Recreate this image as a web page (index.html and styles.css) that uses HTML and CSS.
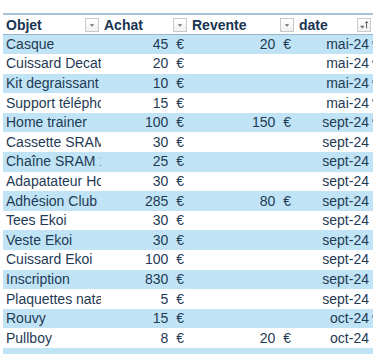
FILE: index.html
```html
<!DOCTYPE html>
<html lang="fr">
<head>
<meta charset="utf-8">
<title>Tableau</title>
<link rel="stylesheet" href="styles.css">
</head>
<body>
<table class="sheet">
  <colgroup>
    <col class="c-obj"><col class="c-achat"><col class="c-rev"><col class="c-date">
  </colgroup>
  <thead>
    <tr>
      <th><div class="hd"><span>Objet</span><span class="btn"><svg viewBox="0 0 14 14"><path d="M4.5 6h5l-2.5 3z" fill="#6b6b6b"/></svg></span></div></th>
      <th><div class="hd"><span>Achat</span><span class="btn"><svg viewBox="0 0 14 14"><path d="M4.5 6h5l-2.5 3z" fill="#6b6b6b"/></svg></span></div></th>
      <th><div class="hd"><span>Revente</span><span class="btn"><svg viewBox="0 0 14 14"><path d="M4.5 6h5l-2.5 3z" fill="#6b6b6b"/></svg></span></div></th>
      <th><div class="hd"><span>date</span><span class="btn"><svg viewBox="0 0 14 14"><path d="M2.5 8h5l-2.5 3z" fill="#6b6b6b"/><path d="M10 3v8M8.3 4.8L10 3l1.7 1.8" stroke="#555" stroke-width="1.1" fill="none"/></svg></span></div></th>
    </tr>
  </thead>
  <tbody>
    <tr class="b"><td class="o">Casque</td><td class="n">45 <i>€</i></td><td class="n">20 <i>€</i></td><td class="d t">mai-24</td></tr>
    <tr><td class="o">Cuissard Decathlon</td><td class="n">20 <i>€</i></td><td></td><td class="d t">mai-24</td></tr>
    <tr class="b"><td class="o">Kit degraissant</td><td class="n">10 <i>€</i></td><td></td><td class="d t">mai-24</td></tr>
    <tr><td class="o">Support téléphone</td><td class="n">15 <i>€</i></td><td></td><td class="d t">mai-24</td></tr>
    <tr class="b"><td class="o">Home trainer</td><td class="n">100 <i>€</i></td><td class="n">150 <i>€</i></td><td class="d t">sept-24</td></tr>
    <tr><td class="o">Cassette SRAM XG</td><td class="n">30 <i>€</i></td><td></td><td class="d">sept-24</td></tr>
    <tr class="b"><td class="o">Chaîne SRAM 10v</td><td class="n">25 <i>€</i></td><td></td><td class="d">sept-24</td></tr>
    <tr><td class="o">Adapatateur Home</td><td class="n">30 <i>€</i></td><td></td><td class="d">sept-24</td></tr>
    <tr class="b"><td class="o">Adhésion Club</td><td class="n">285 <i>€</i></td><td class="n">80 <i>€</i></td><td class="d">sept-24</td></tr>
    <tr><td class="o">Tees Ekoi</td><td class="n">30 <i>€</i></td><td></td><td class="d">sept-24</td></tr>
    <tr class="b"><td class="o">Veste Ekoi</td><td class="n">30 <i>€</i></td><td></td><td class="d">sept-24</td></tr>
    <tr><td class="o">Cuissard Ekoi</td><td class="n">100 <i>€</i></td><td></td><td class="d">sept-24</td></tr>
    <tr class="b"><td class="o">Inscription</td><td class="n">830 <i>€</i></td><td></td><td class="d">sept-24</td></tr>
    <tr><td class="o">Plaquettes natation</td><td class="n">5 <i>€</i></td><td></td><td class="d">sept-24</td></tr>
    <tr class="b"><td class="o">Rouvy</td><td class="n">15 <i>€</i></td><td></td><td class="d t">oct-24</td></tr>
    <tr><td class="o">Pullboy</td><td class="n">8 <i>€</i></td><td class="n">20 <i>€</i></td><td class="d">oct-24</td></tr>
    <tr class="b"><td class="o"></td><td></td><td></td><td></td></tr>
  </tbody>
</table>
</body>
</html>
```
FILE: styles.css
```css
html, body {
  margin: 0;
  padding: 0;
  background: #ffffff;
  overflow: hidden;
}
body {
  width: 375px;
  height: 354px;
  font-family: "Liberation Sans", Arial, sans-serif;
  font-size: 14px;
  color: #1f3a55;
}
.sheet {
  margin: 13px 0 0 3px;
  border-collapse: collapse;
  table-layout: fixed;
  width: 370px;
}
.c-obj { width: 98px; }
.c-achat { width: 88px; }
.c-rev { width: 107px; }
.c-date { width: 77px; }
thead tr {
  height: 20px;
  border-top: 2px solid #a7c2d6;
  border-bottom: 1px solid #9bb6cc;
}
th {
  padding: 0;
  font-weight: bold;
  text-align: left;
  color: #183452;
}
.hd {
  display: flex;
  align-items: center;
  justify-content: space-between;
  padding: 0 2px 0 3px;
  height: 19px;
}
.btn {
  width: 14px;
  height: 14px;
  box-sizing: border-box;
  border: 1px solid #c9c9c9;
  background: linear-gradient(#ffffff, #f0f0f0);
  display: flex;
}
.btn svg { width: 12px; height: 12px; }
tbody tr { height: 19.6px; }
tbody tr.b { background: #c0e4f5; }
td {
  padding: 0;
  white-space: nowrap;
  overflow: hidden;
  line-height: 19px;
}
td.o { padding-left: 3px; text-overflow: clip; }
td.n { text-align: right; padding-right: 5px; }
td.n i { font-style: normal; margin-left: 4px; }
td.d { text-align: right; padding-right: 4px; position: relative; }
td.t::after {
  content: "";
  position: absolute;
  right: 0;
  top: 6px;
  width: 1px;
  height: 3px;
  background: #8a9aab;
}
```
